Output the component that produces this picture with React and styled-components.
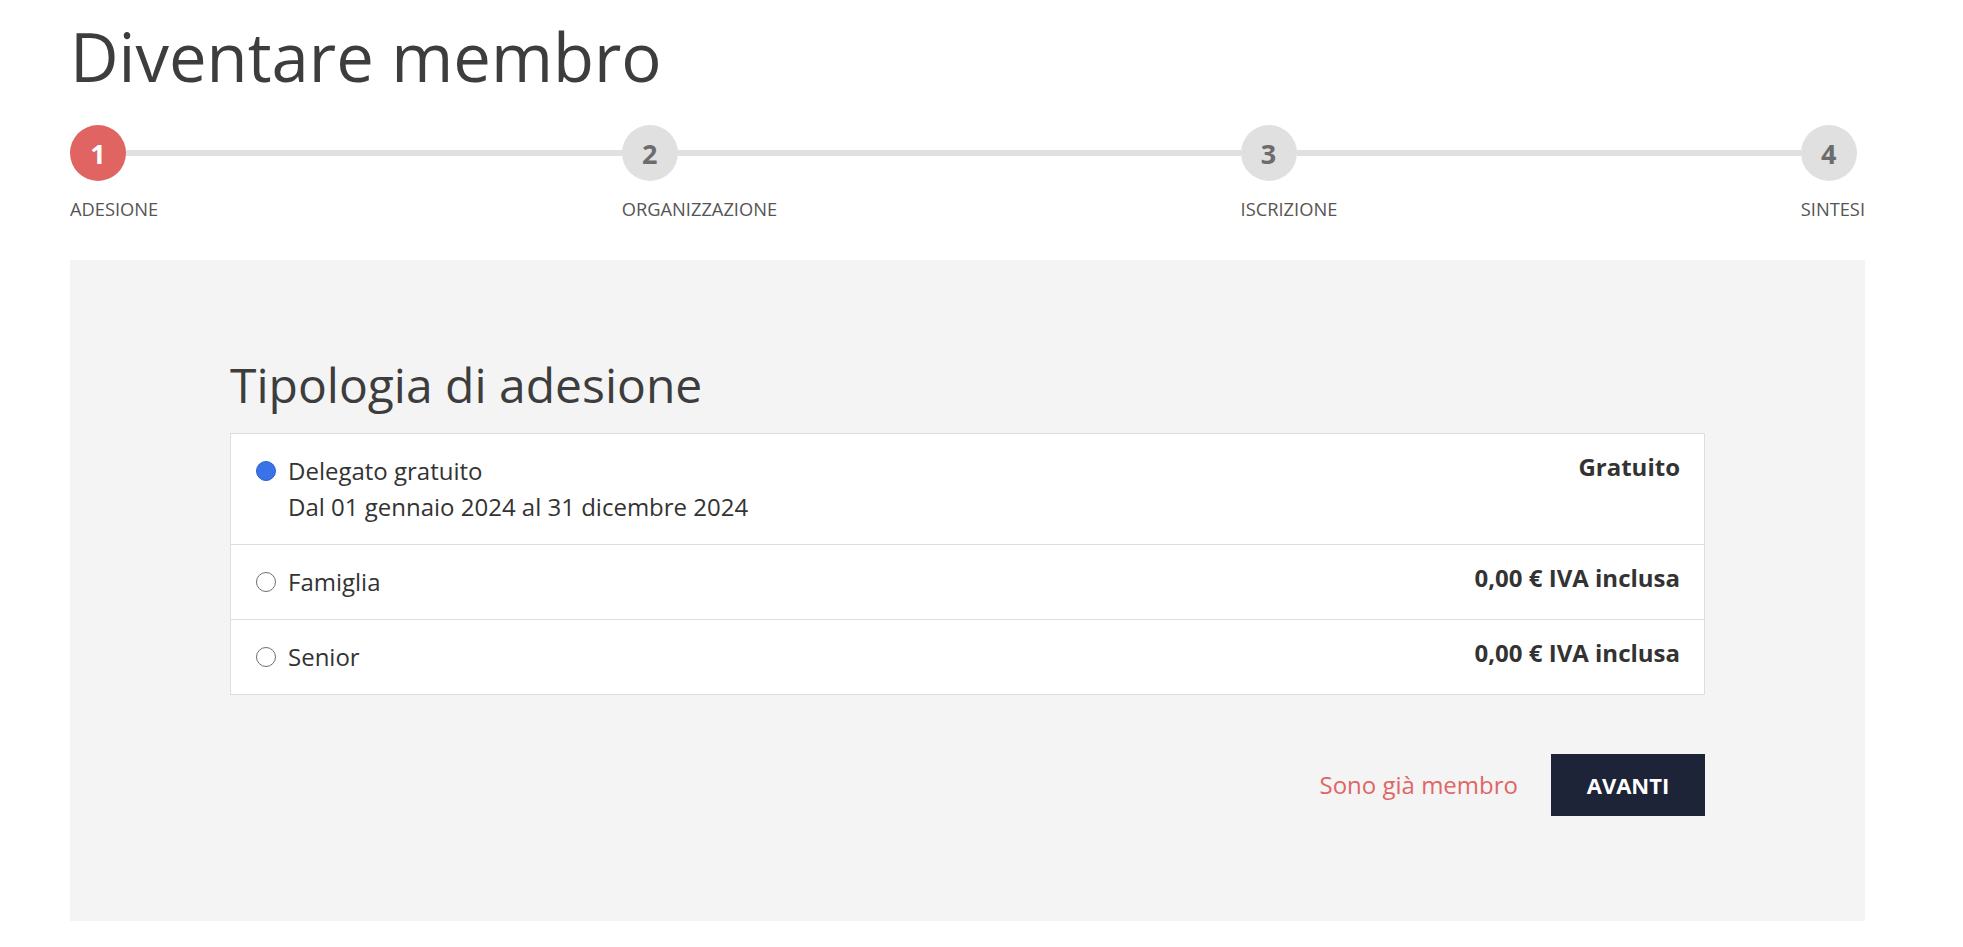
import React, { useState } from "react";
import styled, { createGlobalStyle } from "styled-components";

const GlobalStyle = createGlobalStyle`
  html, body { margin: 0; padding: 0; background: #ffffff; }
  body { font-family: "Open Sans", "Liberation Sans", sans-serif; color: #333333; }
  * { box-sizing: border-box; }
`;

const Page = styled.div`
  width: 1795px;
  margin-left: 70px;
  padding-top: 16px;
`;

const PageTitle = styled.h1`
  margin: 0;
  font-size: 67px;
  font-weight: 400;
  line-height: 1.2;
  color: #3d3d3d;
`;

const Stepper = styled.div`
  display: flex;
  align-items: flex-start;
  margin-top: 29px;
`;

const Step = styled.div`
  display: flex;
  flex-direction: column;
  flex: none;
`;

const StepHead = styled.div`
  display: flex;
  align-items: center;
`;

const Circle = styled.div`
  flex: none;
  width: 56px;
  height: 56px;
  border-radius: 50%;
  display: flex;
  align-items: center;
  justify-content: center;
  font-size: 27px;
  font-weight: 700;
  background: ${(p) => (p.$active ? "#e06461" : "#e0e0e0")};
  color: ${(p) => (p.$active ? "#ffffff" : "#6c6c6c")};
`;

const Track = styled.div`
  flex: 1;
  height: 6px;
  background: #e0e0e0;
`;

const Connector = styled(Track)`
  margin-top: 25px;
`;

const StepLabel = styled.div`
  margin-top: 14px;
  font-size: 18.3px;
  line-height: 27px;
  color: #555555;
  text-transform: uppercase;
  white-space: nowrap;
`;

const Panel = styled.section`
  margin-top: 38px;
  background: #f4f4f4;
  padding: 96px 160px 105px;
`;

const SectionTitle = styled.h2`
  margin: 0 0 19px;
  font-size: 48px;
  font-weight: 400;
  line-height: 1.2;
  color: #3d3d3d;
`;

const OptionList = styled.div`
  background: #ffffff;
  border: 1px solid #dedede;
`;

const OptionRow = styled.label`
  display: flex;
  justify-content: space-between;
  align-items: flex-start;
  padding: 19px 24px 19px 25px;
  cursor: pointer;
  & + & {
    border-top: 1px solid #dedede;
  }
`;

const OptionMain = styled.div`
  display: flex;
  align-items: flex-start;
`;

const Radio = styled.span`
  flex: none;
  width: 20px;
  height: 20px;
  margin-top: 8px;
  margin-right: 12px;
  border-radius: 50%;
  border: 1.5px solid ${(p) => (p.$checked ? "#2c5fcf" : "#6f6f6f")};
  background: ${(p) => (p.$checked ? "#3a73e8" : "#ffffff")};
`;

const OptionText = styled.div`
  font-size: 24px;
  line-height: 36px;
  color: #333333;
`;

const Price = styled.div`
  font-size: 24px;
  line-height: 27px;
  font-weight: 700;
  color: #333333;
  white-space: nowrap;
`;

const Actions = styled.div`
  display: flex;
  justify-content: flex-end;
  align-items: center;
  gap: 33px;
  margin-top: 59px;
`;

const TextLink = styled.a`
  font-size: 24px;
  line-height: 36px;
  color: #e06666;
  text-decoration: none;
  cursor: pointer;
`;

const PrimaryButton = styled.button`
  width: 154px;
  height: 62px;
  border: none;
  background: #1e2437;
  color: #ffffff;
  font-family: inherit;
  font-size: 22px;
  font-weight: 700;
  text-transform: uppercase;
  cursor: pointer;
`;

const steps = ["Adesione", "Organizzazione", "Iscrizione", "Sintesi"];

const options = [
  { id: "delegato", name: "Delegato gratuito", sub: "Dal 01 gennaio 2024 al 31 dicembre 2024", price: "Gratuito" },
  { id: "famiglia", name: "Famiglia", price: "0,00 € IVA inclusa" },
  { id: "senior", name: "Senior", price: "0,00 € IVA inclusa" },
];

export default function App() {
  const [selected, setSelected] = useState("delegato");
  return (
    <>
      <GlobalStyle />
      <Page>
        <PageTitle>Diventare membro</PageTitle>
        <Stepper>
          {steps.map((s, i) => (
            <React.Fragment key={s}>
              {i > 0 && <Connector />}
              <Step>
                <StepHead>
                  <Circle $active={i === 0}>{i + 1}</Circle>
                  {i < steps.length - 1 && <Track />}
                </StepHead>
                <StepLabel>{s}</StepLabel>
              </Step>
            </React.Fragment>
          ))}
        </Stepper>
        <Panel>
          <SectionTitle>Tipologia di adesione</SectionTitle>
          <OptionList>
            {options.map((o) => (
              <OptionRow key={o.id} onClick={() => setSelected(o.id)}>
                <OptionMain>
                  <Radio $checked={selected === o.id} />
                  <OptionText>
                    <div>{o.name}</div>
                    {o.sub && <div>{o.sub}</div>}
                  </OptionText>
                </OptionMain>
                <Price>{o.price}</Price>
              </OptionRow>
            ))}
          </OptionList>
          <Actions>
            <TextLink>Sono già membro</TextLink>
            <PrimaryButton>Avanti</PrimaryButton>
          </Actions>
        </Panel>
      </Page>
    </>
  );
}
